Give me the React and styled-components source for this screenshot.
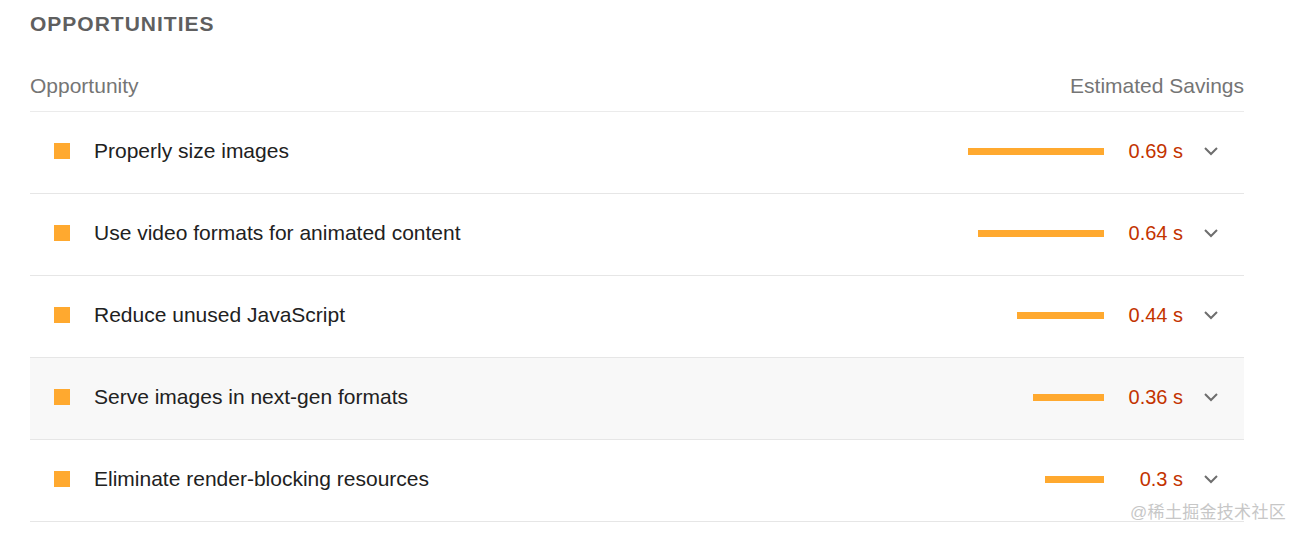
import React from "react";
import styled, { createGlobalStyle } from "styled-components";

const GlobalStyle = createGlobalStyle`
  html, body {
    margin: 0;
    padding: 0;
    background: #fff;
  }
  body {
    font-family: "Liberation Sans", Arial, sans-serif;
  }
`;

const Page = styled.div`
  position: relative;
  width: 1304px;
  height: 538px;
  overflow: hidden;
  padding: 0 60px 0 30px;
  box-sizing: border-box;
`;

const Title = styled.h2`
  margin: 0;
  padding-top: 12px;
  font-size: 21px;
  line-height: 24px;
  font-weight: 700;
  letter-spacing: 1px;
  color: #5f5f5f;
`;

const HeaderRow = styled.div`
  display: flex;
  justify-content: space-between;
  align-items: center;
  padding: 37px 0 13px;
  font-size: 21px;
  line-height: 25px;
  color: #757575;
  border-bottom: 1px solid #ebebeb;
`;

const Row = styled.div`
  display: flex;
  align-items: center;
  height: 78px;
  padding: 0 23px 3px 24px;
  border-bottom: 1px solid #e6e6e6;
  background: ${(p) => (p.$active ? "#f8f8f8" : "#fff")};
`;

const Square = styled.span`
  width: 16px;
  height: 16px;
  background: #ffa92f;
  flex-shrink: 0;
`;

const Label = styled.span`
  flex: 1;
  margin-left: 24px;
  font-size: 21px;
  color: #212121;
`;

const Bar = styled.span`
  height: 7px;
  background: #ffa92f;
`;

const Value = styled.span`
  width: 79px;
  text-align: right;
  font-size: 20px;
  color: #c33300;
`;

const Chevron = styled.svg`
  width: 20px;
  height: 20px;
  margin-left: 18px;
`;

const Watermark = styled.div`
  position: absolute;
  right: 18px;
  top: 498px;
  font-family: "Liberation Sans", "Noto Sans CJK SC", sans-serif;
  font-size: 17px;
  color: #c7c7c7;
  letter-spacing: 0.3px;
`;

const items = [
  { title: "Properly size images", value: "0.69 s", bar: 136 },
  { title: "Use video formats for animated content", value: "0.64 s", bar: 126 },
  { title: "Reduce unused JavaScript", value: "0.44 s", bar: 87 },
  { title: "Serve images in next-gen formats", value: "0.36 s", bar: 71, active: true },
  { title: "Eliminate render-blocking resources", value: "0.3 s", bar: 59 },
];

export default function App() {
  return (
    <>
      <GlobalStyle />
      <Page>
        <Title>OPPORTUNITIES</Title>
        <HeaderRow>
          <span>Opportunity</span>
          <span>Estimated Savings</span>
        </HeaderRow>
        {items.map((item) => (
          <Row key={item.title} $active={item.active}>
            <Square />
            <Label>{item.title}</Label>
            <Bar style={{ width: item.bar }} />
            <Value>{item.value}</Value>
            <Chevron viewBox="0 0 20 20">
              <polyline
                points="4,7 10,13 16,7"
                fill="none"
                stroke="#6e6e6e"
                strokeWidth="2"
              />
            </Chevron>
          </Row>
        ))}
        <Watermark>@稀土掘金技术社区</Watermark>
      </Page>
    </>
  );
}
